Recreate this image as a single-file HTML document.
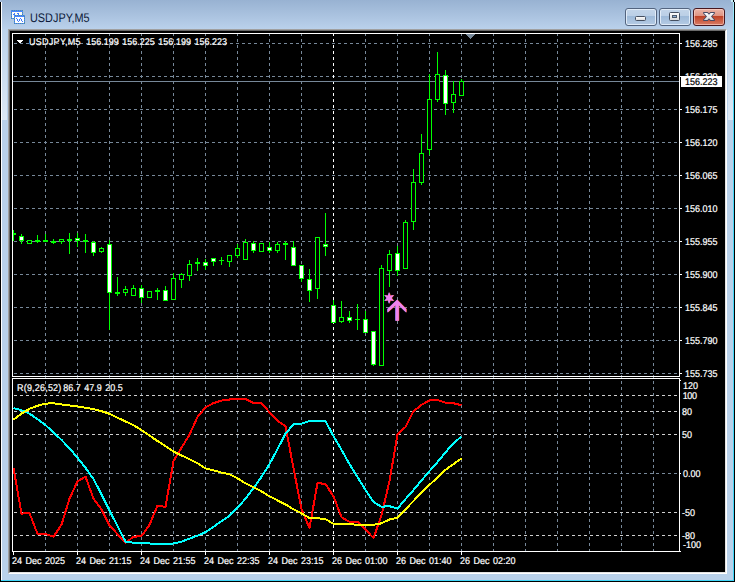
<!DOCTYPE html>
<html><head><meta charset="utf-8"><title>USDJPY,M5</title>
<style>
html,body{margin:0;padding:0;background:#fff;}
body{width:737px;height:582px;position:relative;overflow:hidden;font-family:"Liberation Sans",sans-serif;}
.abs{position:absolute;}
.t{position:absolute;color:#fff;font-size:9px;line-height:11px;white-space:nowrap;word-spacing:1px;font-family:"Liberation Sans",sans-serif;transform:scaleY(1.09);text-rendering:geometricPrecision;transform-origin:0 0;-webkit-text-stroke:.2px #fff;}
#win{left:0;top:0;width:735px;height:582px;background:#000;}
#frame{left:1px;top:0;width:733px;height:581px;background:#b9d1ea;}
#title{left:1px;top:0;width:733px;height:29px;background:linear-gradient(#98b2d2,#bad1eb);}
#hl-l{left:1px;top:2px;width:1px;height:578px;background:#fff;}
#hl-r{left:733px;top:2px;width:1px;height:579px;background:linear-gradient(#aeeefc 0,#46d8f8 50px,#3fd5f7 100%);}
#hl-b{left:1px;top:580px;width:733px;height:1px;background:#3fd5f7;}
#client{left:8px;top:29px;width:719px;height:545px;background:#000;box-sizing:border-box;border-top:1px solid #a0a0a0;border-left:1px solid #a0a0a0;border-right:1px solid #fff;border-bottom:1px solid #fff;}
#client2{left:9px;top:30px;width:717px;height:543px;background:#000;box-sizing:border-box;border-top:1px solid #696969;border-left:1px solid #696969;border-right:1px solid #e3e3e3;border-bottom:1px solid #e3e3e3;}
#ttl{left:30px;top:11px;text-rendering:geometricPrecision;font-size:12.5px;line-height:15px;color:#0d1a3a;white-space:nowrap;transform:scaleX(.87);transform-origin:0 0;}
.btn{position:absolute;top:8px;width:32px;height:18px;box-sizing:border-box;border:1px solid #53647f;border-radius:3px;background:linear-gradient(#c3d5e9 0,#bbcfe6 42%,#9ebad9 46%,#b5cbe4 100%);box-shadow:inset 0 0 0 1px rgba(228,238,249,.9);}
#bc{border-color:#471820;background:linear-gradient(#ebb5a8 0,#df9483 42%,#bf4226 46%,#d97c66 100%);box-shadow:inset 0 0 0 1px rgba(255,215,205,.6);}
#pricebox{left:681px;top:76px;width:41px;height:11px;background:#fff;}
</style></head><body>
<div id="win" class="abs"></div>
<div id="frame" class="abs"></div>
<div id="title" class="abs"></div>
<div class="abs" style="left:2px;top:29px;width:5px;height:91px;background:linear-gradient(rgba(255,255,255,.05),rgba(255,255,255,.5))"></div>
<div class="abs" style="left:728px;top:29px;width:5px;height:91px;background:linear-gradient(rgba(255,255,255,.05),rgba(255,255,255,.5))"></div>
<div id="hl-l" class="abs"></div>
<div id="hl-r" class="abs"></div>
<div id="hl-b" class="abs"></div>
<div class="abs" style="left:0;top:0;width:1px;height:2px;background:#a9c1df"></div>
<div class="abs" style="left:731px;top:0;width:2px;height:2px;background:#c8f0f8"></div>
<div class="abs" style="left:733px;top:0;width:1px;height:2px;background:#000"></div>
<div class="abs" style="left:734px;top:0;width:1px;height:2px;background:#d4e4f2"></div>
<div id="client" class="abs"></div>
<div id="client2" class="abs"></div>
<svg class="abs" style="left:0;top:0" width="737" height="582" viewBox="0 0 737 582" shape-rendering="crispEdges">
<defs>
<clipPath id="cm"><rect x="13" y="34" width="666" height="342"/></clipPath>
<clipPath id="ci"><rect x="13" y="379" width="666" height="172"/></clipPath>
</defs>
<line x1="13" x2="679" y1="43.5" y2="43.5" stroke="#778899" stroke-dasharray="3 3" stroke-dashoffset="5"/>
<line x1="13" x2="679" y1="76.5" y2="76.5" stroke="#778899" stroke-dasharray="3 3" stroke-dashoffset="5"/>
<line x1="13" x2="679" y1="109.5" y2="109.5" stroke="#778899" stroke-dasharray="3 3" stroke-dashoffset="5"/>
<line x1="13" x2="679" y1="142.5" y2="142.5" stroke="#778899" stroke-dasharray="3 3" stroke-dashoffset="5"/>
<line x1="13" x2="679" y1="175.5" y2="175.5" stroke="#778899" stroke-dasharray="3 3" stroke-dashoffset="5"/>
<line x1="13" x2="679" y1="208.5" y2="208.5" stroke="#778899" stroke-dasharray="3 3" stroke-dashoffset="5"/>
<line x1="13" x2="679" y1="241.5" y2="241.5" stroke="#778899" stroke-dasharray="3 3" stroke-dashoffset="5"/>
<line x1="13" x2="679" y1="274.5" y2="274.5" stroke="#778899" stroke-dasharray="3 3" stroke-dashoffset="5"/>
<line x1="13" x2="679" y1="307.5" y2="307.5" stroke="#778899" stroke-dasharray="3 3" stroke-dashoffset="5"/>
<line x1="13" x2="679" y1="340.5" y2="340.5" stroke="#778899" stroke-dasharray="3 3" stroke-dashoffset="5"/>
<line x1="13" x2="679" y1="373.5" y2="373.5" stroke="#778899" stroke-dasharray="3 3" stroke-dashoffset="5"/>
<line x1="45.5" x2="45.5" y1="34" y2="378" stroke="#778899" stroke-dasharray="3 3" stroke-dashoffset="1"/>
<line x1="45.5" x2="45.5" y1="379" y2="551" stroke="#778899" stroke-dasharray="3 3" stroke-dashoffset="4"/>
<line x1="77.5" x2="77.5" y1="34" y2="378" stroke="#778899" stroke-dasharray="3 3" stroke-dashoffset="1"/>
<line x1="77.5" x2="77.5" y1="379" y2="551" stroke="#778899" stroke-dasharray="3 3" stroke-dashoffset="4"/>
<line x1="109.5" x2="109.5" y1="34" y2="378" stroke="#778899" stroke-dasharray="3 3" stroke-dashoffset="1"/>
<line x1="109.5" x2="109.5" y1="379" y2="551" stroke="#778899" stroke-dasharray="3 3" stroke-dashoffset="4"/>
<line x1="141.5" x2="141.5" y1="34" y2="378" stroke="#778899" stroke-dasharray="3 3" stroke-dashoffset="1"/>
<line x1="141.5" x2="141.5" y1="379" y2="551" stroke="#778899" stroke-dasharray="3 3" stroke-dashoffset="4"/>
<line x1="173.5" x2="173.5" y1="34" y2="378" stroke="#778899" stroke-dasharray="3 3" stroke-dashoffset="1"/>
<line x1="173.5" x2="173.5" y1="379" y2="551" stroke="#778899" stroke-dasharray="3 3" stroke-dashoffset="4"/>
<line x1="205.5" x2="205.5" y1="34" y2="378" stroke="#778899" stroke-dasharray="3 3" stroke-dashoffset="1"/>
<line x1="205.5" x2="205.5" y1="379" y2="551" stroke="#778899" stroke-dasharray="3 3" stroke-dashoffset="4"/>
<line x1="237.5" x2="237.5" y1="34" y2="378" stroke="#778899" stroke-dasharray="3 3" stroke-dashoffset="1"/>
<line x1="237.5" x2="237.5" y1="379" y2="551" stroke="#778899" stroke-dasharray="3 3" stroke-dashoffset="4"/>
<line x1="269.5" x2="269.5" y1="34" y2="378" stroke="#778899" stroke-dasharray="3 3" stroke-dashoffset="1"/>
<line x1="269.5" x2="269.5" y1="379" y2="551" stroke="#778899" stroke-dasharray="3 3" stroke-dashoffset="4"/>
<line x1="301.5" x2="301.5" y1="34" y2="378" stroke="#778899" stroke-dasharray="3 3" stroke-dashoffset="1"/>
<line x1="301.5" x2="301.5" y1="379" y2="551" stroke="#778899" stroke-dasharray="3 3" stroke-dashoffset="4"/>
<line x1="333.5" x2="333.5" y1="34" y2="378" stroke="#ffffff" stroke-dasharray="3 3" stroke-dashoffset="1"/>
<line x1="333.5" x2="333.5" y1="379" y2="551" stroke="#ffffff" stroke-dasharray="3 3" stroke-dashoffset="4"/>
<line x1="365.5" x2="365.5" y1="34" y2="378" stroke="#778899" stroke-dasharray="3 3" stroke-dashoffset="1"/>
<line x1="365.5" x2="365.5" y1="379" y2="551" stroke="#778899" stroke-dasharray="3 3" stroke-dashoffset="4"/>
<line x1="397.5" x2="397.5" y1="34" y2="378" stroke="#778899" stroke-dasharray="3 3" stroke-dashoffset="1"/>
<line x1="397.5" x2="397.5" y1="379" y2="551" stroke="#778899" stroke-dasharray="3 3" stroke-dashoffset="4"/>
<line x1="429.5" x2="429.5" y1="34" y2="378" stroke="#778899" stroke-dasharray="3 3" stroke-dashoffset="1"/>
<line x1="429.5" x2="429.5" y1="379" y2="551" stroke="#778899" stroke-dasharray="3 3" stroke-dashoffset="4"/>
<line x1="461.5" x2="461.5" y1="34" y2="378" stroke="#778899" stroke-dasharray="3 3" stroke-dashoffset="1"/>
<line x1="461.5" x2="461.5" y1="379" y2="551" stroke="#778899" stroke-dasharray="3 3" stroke-dashoffset="4"/>
<line x1="493.5" x2="493.5" y1="34" y2="378" stroke="#778899" stroke-dasharray="3 3" stroke-dashoffset="1"/>
<line x1="493.5" x2="493.5" y1="379" y2="551" stroke="#778899" stroke-dasharray="3 3" stroke-dashoffset="4"/>
<line x1="525.5" x2="525.5" y1="34" y2="378" stroke="#778899" stroke-dasharray="3 3" stroke-dashoffset="1"/>
<line x1="525.5" x2="525.5" y1="379" y2="551" stroke="#778899" stroke-dasharray="3 3" stroke-dashoffset="4"/>
<line x1="557.5" x2="557.5" y1="34" y2="378" stroke="#778899" stroke-dasharray="3 3" stroke-dashoffset="1"/>
<line x1="557.5" x2="557.5" y1="379" y2="551" stroke="#778899" stroke-dasharray="3 3" stroke-dashoffset="4"/>
<line x1="589.5" x2="589.5" y1="34" y2="378" stroke="#778899" stroke-dasharray="3 3" stroke-dashoffset="1"/>
<line x1="589.5" x2="589.5" y1="379" y2="551" stroke="#778899" stroke-dasharray="3 3" stroke-dashoffset="4"/>
<line x1="621.5" x2="621.5" y1="34" y2="378" stroke="#778899" stroke-dasharray="3 3" stroke-dashoffset="1"/>
<line x1="621.5" x2="621.5" y1="379" y2="551" stroke="#778899" stroke-dasharray="3 3" stroke-dashoffset="4"/>
<line x1="653.5" x2="653.5" y1="34" y2="378" stroke="#778899" stroke-dasharray="3 3" stroke-dashoffset="1"/>
<line x1="653.5" x2="653.5" y1="379" y2="551" stroke="#778899" stroke-dasharray="3 3" stroke-dashoffset="4"/>
<line x1="13" x2="679" y1="395.5" y2="395.5" stroke="#cfcfcf" stroke-dasharray="3 3" stroke-dashoffset="5"/>
<line x1="13" x2="679" y1="411.5" y2="411.5" stroke="#cfcfcf" stroke-dasharray="3 3" stroke-dashoffset="5"/>
<line x1="13" x2="679" y1="434.5" y2="434.5" stroke="#cfcfcf" stroke-dasharray="3 3" stroke-dashoffset="5"/>
<line x1="13" x2="679" y1="473.5" y2="473.5" stroke="#778899" stroke-dasharray="3 3" stroke-dashoffset="5"/>
<line x1="13" x2="679" y1="512.5" y2="512.5" stroke="#cfcfcf" stroke-dasharray="3 3" stroke-dashoffset="5"/>
<line x1="13" x2="679" y1="535.5" y2="535.5" stroke="#cfcfcf" stroke-dasharray="3 3" stroke-dashoffset="5"/>
<line x1="13" x2="679" y1="81.5" y2="81.5" stroke="#778899"/>
<g clip-path="url(#cm)">
<rect x="13" y="230" width="1" height="11" fill="#00ff00"/>
<rect x="11" y="233" width="5" height="2" fill="#00ff00"/>
<rect x="21" y="234" width="1" height="10" fill="#00ff00"/>
<rect x="19" y="236" width="5" height="5" fill="#00ff00"/>
<rect x="20" y="237" width="3" height="3" fill="#ffffff"/>
<rect x="29" y="240" width="1" height="4" fill="#00ff00"/>
<rect x="27" y="240" width="5" height="4" fill="#00ff00"/>
<rect x="28" y="241" width="3" height="2" fill="#000000"/>
<rect x="37" y="235" width="1" height="8" fill="#00ff00"/>
<rect x="35" y="240" width="5" height="2" fill="#00ff00"/>
<rect x="45" y="234" width="1" height="8" fill="#00ff00"/>
<rect x="43" y="240" width="5" height="2" fill="#00ff00"/>
<rect x="53" y="239" width="1" height="5" fill="#00ff00"/>
<rect x="51" y="241" width="5" height="2" fill="#00ff00"/>
<rect x="61" y="239" width="1" height="5" fill="#00ff00"/>
<rect x="59" y="239" width="5" height="3" fill="#00ff00"/>
<rect x="60" y="240" width="3" height="1" fill="#000000"/>
<rect x="69" y="233" width="1" height="21" fill="#00ff00"/>
<rect x="67" y="239" width="5" height="2" fill="#00ff00"/>
<rect x="77" y="233" width="1" height="14" fill="#00ff00"/>
<rect x="75" y="238" width="5" height="3" fill="#00ff00"/>
<rect x="76" y="239" width="3" height="1" fill="#ffffff"/>
<rect x="85" y="234" width="1" height="19" fill="#00ff00"/>
<rect x="83" y="240" width="5" height="2" fill="#00ff00"/>
<rect x="93" y="241" width="1" height="15" fill="#00ff00"/>
<rect x="91" y="242" width="5" height="11" fill="#00ff00"/>
<rect x="92" y="243" width="3" height="9" fill="#ffffff"/>
<rect x="101" y="247" width="1" height="6" fill="#00ff00"/>
<rect x="99" y="248" width="5" height="4" fill="#00ff00"/>
<rect x="100" y="249" width="3" height="2" fill="#000000"/>
<rect x="109" y="240" width="1" height="90" fill="#00ff00"/>
<rect x="107" y="244" width="5" height="49" fill="#00ff00"/>
<rect x="108" y="245" width="3" height="47" fill="#ffffff"/>
<rect x="117" y="277" width="1" height="19" fill="#00ff00"/>
<rect x="115" y="292" width="5" height="2" fill="#00ff00"/>
<rect x="125" y="286" width="1" height="10" fill="#00ff00"/>
<rect x="123" y="289" width="5" height="4" fill="#00ff00"/>
<rect x="124" y="290" width="3" height="2" fill="#000000"/>
<rect x="133" y="285" width="1" height="11" fill="#00ff00"/>
<rect x="131" y="288" width="5" height="8" fill="#00ff00"/>
<rect x="132" y="289" width="3" height="6" fill="#000000"/>
<rect x="141" y="285" width="1" height="18" fill="#00ff00"/>
<rect x="139" y="288" width="5" height="10" fill="#00ff00"/>
<rect x="140" y="289" width="3" height="8" fill="#ffffff"/>
<rect x="149" y="291" width="1" height="7" fill="#00ff00"/>
<rect x="147" y="291" width="5" height="7" fill="#00ff00"/>
<rect x="148" y="292" width="3" height="5" fill="#000000"/>
<rect x="157" y="288" width="1" height="12" fill="#00ff00"/>
<rect x="155" y="290" width="5" height="2" fill="#00ff00"/>
<rect x="165" y="286" width="1" height="15" fill="#00ff00"/>
<rect x="163" y="290" width="5" height="11" fill="#00ff00"/>
<rect x="164" y="291" width="3" height="9" fill="#ffffff"/>
<rect x="173" y="273" width="1" height="27" fill="#00ff00"/>
<rect x="171" y="278" width="5" height="22" fill="#00ff00"/>
<rect x="172" y="279" width="3" height="20" fill="#000000"/>
<rect x="181" y="273" width="1" height="15" fill="#00ff00"/>
<rect x="179" y="274" width="5" height="6" fill="#00ff00"/>
<rect x="180" y="275" width="3" height="4" fill="#000000"/>
<rect x="189" y="260" width="1" height="21" fill="#00ff00"/>
<rect x="187" y="264" width="5" height="12" fill="#00ff00"/>
<rect x="188" y="265" width="3" height="10" fill="#000000"/>
<rect x="197" y="258" width="1" height="13" fill="#00ff00"/>
<rect x="195" y="262" width="5" height="2" fill="#00ff00"/>
<rect x="205" y="259" width="1" height="11" fill="#00ff00"/>
<rect x="203" y="262" width="5" height="4" fill="#00ff00"/>
<rect x="204" y="263" width="3" height="2" fill="#ffffff"/>
<rect x="213" y="258" width="1" height="8" fill="#00ff00"/>
<rect x="211" y="258" width="5" height="4" fill="#00ff00"/>
<rect x="212" y="259" width="3" height="2" fill="#ffffff"/>
<rect x="221" y="257" width="1" height="8" fill="#00ff00"/>
<rect x="219" y="260" width="5" height="1" fill="#00ff00"/>
<rect x="229" y="255" width="1" height="12" fill="#00ff00"/>
<rect x="227" y="255" width="5" height="7" fill="#00ff00"/>
<rect x="228" y="256" width="3" height="5" fill="#000000"/>
<rect x="237" y="244" width="1" height="14" fill="#00ff00"/>
<rect x="235" y="248" width="5" height="8" fill="#00ff00"/>
<rect x="236" y="249" width="3" height="6" fill="#000000"/>
<rect x="245" y="239" width="1" height="21" fill="#00ff00"/>
<rect x="243" y="242" width="5" height="18" fill="#00ff00"/>
<rect x="244" y="243" width="3" height="16" fill="#000000"/>
<rect x="253" y="241" width="1" height="12" fill="#00ff00"/>
<rect x="251" y="243" width="5" height="8" fill="#00ff00"/>
<rect x="252" y="244" width="3" height="6" fill="#ffffff"/>
<rect x="261" y="243" width="1" height="9" fill="#00ff00"/>
<rect x="259" y="243" width="5" height="9" fill="#00ff00"/>
<rect x="260" y="244" width="3" height="7" fill="#000000"/>
<rect x="269" y="242" width="1" height="11" fill="#00ff00"/>
<rect x="267" y="247" width="5" height="4" fill="#00ff00"/>
<rect x="268" y="248" width="3" height="2" fill="#ffffff"/>
<rect x="277" y="242" width="1" height="11" fill="#00ff00"/>
<rect x="275" y="244" width="5" height="7" fill="#00ff00"/>
<rect x="276" y="245" width="3" height="5" fill="#000000"/>
<rect x="285" y="241" width="1" height="19" fill="#00ff00"/>
<rect x="283" y="243" width="5" height="2" fill="#00ff00"/>
<rect x="293" y="241" width="1" height="25" fill="#00ff00"/>
<rect x="291" y="247" width="5" height="19" fill="#00ff00"/>
<rect x="292" y="248" width="3" height="17" fill="#ffffff"/>
<rect x="301" y="265" width="1" height="17" fill="#00ff00"/>
<rect x="299" y="265" width="5" height="14" fill="#00ff00"/>
<rect x="300" y="266" width="3" height="12" fill="#ffffff"/>
<rect x="309" y="269" width="1" height="33" fill="#00ff00"/>
<rect x="307" y="279" width="5" height="12" fill="#00ff00"/>
<rect x="308" y="280" width="3" height="10" fill="#ffffff"/>
<rect x="317" y="237" width="1" height="62" fill="#00ff00"/>
<rect x="315" y="237" width="5" height="52" fill="#00ff00"/>
<rect x="316" y="238" width="3" height="50" fill="#000000"/>
<rect x="325" y="213" width="1" height="43" fill="#00ff00"/>
<rect x="323" y="244" width="5" height="3" fill="#00ff00"/>
<rect x="324" y="245" width="3" height="1" fill="#ffffff"/>
<rect x="333" y="300" width="1" height="23" fill="#00ff00"/>
<rect x="331" y="305" width="5" height="18" fill="#00ff00"/>
<rect x="332" y="306" width="3" height="16" fill="#ffffff"/>
<rect x="341" y="301" width="1" height="22" fill="#00ff00"/>
<rect x="339" y="317" width="5" height="5" fill="#00ff00"/>
<rect x="340" y="318" width="3" height="3" fill="#000000"/>
<rect x="349" y="311" width="1" height="12" fill="#00ff00"/>
<rect x="347" y="317" width="5" height="4" fill="#00ff00"/>
<rect x="348" y="318" width="3" height="2" fill="#ffffff"/>
<rect x="357" y="304" width="1" height="26" fill="#00ff00"/>
<rect x="355" y="319" width="5" height="1" fill="#00ff00"/>
<rect x="365" y="311" width="1" height="22" fill="#00ff00"/>
<rect x="363" y="319" width="5" height="14" fill="#00ff00"/>
<rect x="364" y="320" width="3" height="12" fill="#ffffff"/>
<rect x="373" y="331" width="1" height="35" fill="#00ff00"/>
<rect x="371" y="331" width="5" height="34" fill="#00ff00"/>
<rect x="372" y="332" width="3" height="32" fill="#ffffff"/>
<rect x="381" y="265" width="1" height="101" fill="#00ff00"/>
<rect x="379" y="268" width="5" height="98" fill="#00ff00"/>
<rect x="380" y="269" width="3" height="96" fill="#000000"/>
<rect x="389" y="250" width="1" height="37" fill="#00ff00"/>
<rect x="387" y="254" width="5" height="17" fill="#00ff00"/>
<rect x="388" y="255" width="3" height="15" fill="#000000"/>
<rect x="397" y="246" width="1" height="30" fill="#00ff00"/>
<rect x="395" y="253" width="5" height="18" fill="#00ff00"/>
<rect x="396" y="254" width="3" height="16" fill="#ffffff"/>
<rect x="405" y="220" width="1" height="49" fill="#00ff00"/>
<rect x="403" y="222" width="5" height="47" fill="#00ff00"/>
<rect x="404" y="223" width="3" height="45" fill="#000000"/>
<rect x="413" y="169" width="1" height="61" fill="#00ff00"/>
<rect x="411" y="182" width="5" height="40" fill="#00ff00"/>
<rect x="412" y="183" width="3" height="38" fill="#000000"/>
<rect x="421" y="134" width="1" height="51" fill="#00ff00"/>
<rect x="419" y="153" width="5" height="30" fill="#00ff00"/>
<rect x="420" y="154" width="3" height="28" fill="#000000"/>
<rect x="429" y="74" width="1" height="81" fill="#00ff00"/>
<rect x="427" y="99" width="5" height="51" fill="#00ff00"/>
<rect x="428" y="100" width="3" height="49" fill="#000000"/>
<rect x="437" y="52" width="1" height="50" fill="#00ff00"/>
<rect x="435" y="74" width="5" height="26" fill="#00ff00"/>
<rect x="436" y="75" width="3" height="24" fill="#000000"/>
<rect x="445" y="70" width="1" height="45" fill="#00ff00"/>
<rect x="443" y="75" width="5" height="29" fill="#00ff00"/>
<rect x="444" y="76" width="3" height="27" fill="#ffffff"/>
<rect x="453" y="81" width="1" height="32" fill="#00ff00"/>
<rect x="451" y="94" width="5" height="9" fill="#00ff00"/>
<rect x="452" y="95" width="3" height="7" fill="#000000"/>
<rect x="461" y="79" width="1" height="17" fill="#00ff00"/>
<rect x="459" y="81" width="5" height="15" fill="#00ff00"/>
<rect x="460" y="82" width="3" height="13" fill="#000000"/>
</g>
<g clip-path="url(#ci)">
<polyline points="13.5,468.0 21.5,513.6 29.5,513.1 37.5,533.9 45.5,533.9 53.5,536.8 61.5,524.7 69.5,498.7 77.5,481.4 85.5,476.6 93.5,498.7 101.5,509.3 109.5,525.3 117.5,534.1 125.5,542.9 133.5,536.7 141.5,536.2 149.5,524.8 157.5,505.7 165.5,506.9 173.5,461.1 181.5,447.7 189.5,434.7 197.5,417.1 205.5,407.3 213.5,403.1 221.5,400.6 229.5,399.5 237.5,399.0 245.5,399.0 253.5,403.1 261.5,403.1 269.5,412.2 277.5,420.7 285.5,426.4 293.5,468.1 301.5,509.1 309.5,528.1 317.5,482.9 325.5,484.1 333.5,496.3 341.5,517.2 349.5,521.9 357.5,521.9 365.5,529.5 373.5,538.1 381.5,515.3 389.5,481.1 397.5,434.6 405.5,427.0 413.5,411.3 421.5,404.8 429.5,400.4 437.5,399.9 445.5,402.7 453.5,403.3 461.5,405.2" fill="none" stroke="#ff0000" stroke-width="2" stroke-linejoin="round" stroke-linecap="butt"/>
<polyline points="13.5,408.1 21.5,410.2 29.5,413.6 37.5,419.1 45.5,425.1 53.5,432.5 61.5,439.9 69.5,448.3 77.5,457.6 85.5,467.8 93.5,479.1 101.5,494.3 109.5,510.4 117.5,526.1 125.5,541.6 133.5,542.7 141.5,543.1 149.5,543.5 157.5,543.9 165.5,543.9 173.5,543.5 181.5,541.6 189.5,538.6 197.5,535.7 205.5,532.1 213.5,526.8 221.5,521.1 229.5,515.8 237.5,507.7 245.5,498.7 253.5,488.1 261.5,476.8 269.5,464.1 277.5,449.1 285.5,433.7 293.5,424.3 301.5,423.6 309.5,421.1 317.5,421.1 325.5,421.1 333.5,436.1 341.5,449.8 349.5,464.1 357.5,477.1 365.5,490.0 373.5,502.0 381.5,506.7 389.5,506.2 397.5,508.6 405.5,499.1 413.5,490.0 421.5,480.5 429.5,471.1 437.5,462.1 445.5,452.3 453.5,443.2 461.5,436.5" fill="none" stroke="#00ffff" stroke-width="2" stroke-linejoin="round" stroke-linecap="butt"/>
<polyline points="13.5,419.6 21.5,413.6 29.5,408.8 37.5,405.8 45.5,403.6 53.5,403.3 61.5,404.4 69.5,405.4 77.5,406.4 85.5,407.7 93.5,409.2 101.5,411.2 109.5,413.9 117.5,417.7 125.5,421.5 133.5,425.1 141.5,430.1 149.5,435.6 157.5,441.0 165.5,446.2 173.5,451.6 181.5,455.4 189.5,459.3 197.5,463.3 205.5,468.4 213.5,470.3 221.5,472.6 229.5,474.3 237.5,478.4 245.5,483.3 253.5,487.3 261.5,491.4 269.5,496.3 277.5,500.4 285.5,504.4 293.5,509.3 301.5,513.4 309.5,518.0 317.5,518.3 325.5,519.1 333.5,523.9 341.5,524.2 349.5,524.2 357.5,524.8 365.5,524.8 373.5,524.8 381.5,523.3 389.5,519.5 397.5,517.6 405.5,509.2 413.5,501.0 421.5,492.5 429.5,484.9 437.5,477.3 445.5,469.9 453.5,464.1 461.5,458.4" fill="none" stroke="#ffff00" stroke-width="2" stroke-linejoin="round" stroke-linecap="butt"/>
</g>
<polygon points="465,34 475,34 470,39" fill="#778899"/>
<polygon points="16,40 23,40 19.5,43.5" fill="#ffffff"/>
<rect x="12.5" y="33.5" width="667" height="343" fill="none" stroke="#fff"/>
<rect x="12.5" y="378.5" width="667" height="173" fill="none" stroke="#fff"/>
<rect x="680" y="43" width="2" height="1" fill="#fff"/>
<rect x="680" y="76" width="2" height="1" fill="#fff"/>
<rect x="680" y="109" width="2" height="1" fill="#fff"/>
<rect x="680" y="142" width="2" height="1" fill="#fff"/>
<rect x="680" y="175" width="2" height="1" fill="#fff"/>
<rect x="680" y="208" width="2" height="1" fill="#fff"/>
<rect x="680" y="241" width="2" height="1" fill="#fff"/>
<rect x="680" y="274" width="2" height="1" fill="#fff"/>
<rect x="680" y="307" width="2" height="1" fill="#fff"/>
<rect x="680" y="340" width="2" height="1" fill="#fff"/>
<rect x="680" y="373" width="2" height="1" fill="#fff"/>
<rect x="680" y="473" width="1" height="1" fill="#fff"/>
<rect x="680" y="551" width="1" height="1" fill="#fff"/>
<rect x="680" y="380" width="1" height="1" fill="#fff"/>
<rect x="13" y="552" width="1" height="3" fill="#fff"/>
<rect x="77" y="552" width="1" height="3" fill="#fff"/>
<rect x="141" y="552" width="1" height="3" fill="#fff"/>
<rect x="205" y="552" width="1" height="3" fill="#fff"/>
<rect x="269" y="552" width="1" height="3" fill="#fff"/>
<rect x="333" y="552" width="1" height="3" fill="#fff"/>
<rect x="397" y="552" width="1" height="3" fill="#fff"/>
<rect x="461" y="552" width="1" height="3" fill="#fff"/>
<g shape-rendering="geometricPrecision">
<g transform="translate(-0.45,0)" fill="#7a7aff"><path d="M397.2,299.8 L406.3,309 L406.3,312.5 L398.8,305.2 L398.8,320.8 L395.6,320.8 L395.6,305.2 L387.6,312.5 L387.6,309 Z"/><path d="M389.20,292.20 L390.38,295.83 L393.92,295.10 L391.55,298.00 L393.92,300.90 L390.38,300.17 L389.20,303.80 L388.02,300.17 L384.48,300.90 L386.85,298.00 L384.48,295.10 L388.02,295.83 Z"/></g>
<g transform="translate(0.45,0)" fill="#ff5a20"><path d="M397.2,299.8 L406.3,309 L406.3,312.5 L398.8,305.2 L398.8,320.8 L395.6,320.8 L395.6,305.2 L387.6,312.5 L387.6,309 Z"/><path d="M389.20,292.20 L390.38,295.83 L393.92,295.10 L391.55,298.00 L393.92,300.90 L390.38,300.17 L389.20,303.80 L388.02,300.17 L384.48,300.90 L386.85,298.00 L384.48,295.10 L388.02,295.83 Z"/></g>
<g transform="translate(0,0)" fill="#ee82ee"><path d="M397.2,299.8 L406.3,309 L406.3,312.5 L398.8,305.2 L398.8,320.8 L395.6,320.8 L395.6,305.2 L387.6,312.5 L387.6,309 Z"/><path d="M389.20,292.20 L390.38,295.83 L393.92,295.10 L391.55,298.00 L393.92,300.90 L390.38,300.17 L389.20,303.80 L388.02,300.17 L384.48,300.90 L386.85,298.00 L384.48,295.10 L388.02,295.83 Z"/></g>
</g>
</svg>
<div id="pricebox" class="abs"></div>
<div class="t" style="left:685px;top:37.85px;">156.285</div>
<div class="t" style="left:685px;top:70.85px;">156.230</div>
<div class="t" style="left:685px;top:103.85px;">156.175</div>
<div class="t" style="left:685px;top:136.85px;">156.120</div>
<div class="t" style="left:685px;top:169.85px;">156.065</div>
<div class="t" style="left:685px;top:202.85px;">156.010</div>
<div class="t" style="left:685px;top:235.85px;">155.955</div>
<div class="t" style="left:685px;top:268.85px;">155.900</div>
<div class="t" style="left:685px;top:301.85px;">155.845</div>
<div class="t" style="left:685px;top:334.85px;">155.790</div>
<div class="t" style="left:685px;top:367.85px;">155.735</div>
<div class="t" style="left:683px;top:379.85px;">120</div>
<div class="t" style="left:682.7px;top:389.85px;letter-spacing:-.35px;">100</div>
<div class="t" style="left:682px;top:405.85px;">80</div>
<div class="t" style="left:682px;top:428.85px;">50</div>
<div class="t" style="left:683px;top:467.85px;">0.00</div>
<div class="t" style="left:682px;top:506.85px;">-50</div>
<div class="t" style="left:682px;top:529.85px;">-80</div>
<div class="t" style="left:683px;top:538.85px;">-100</div>
<div class="t" style="left:12px;top:554.85px;">24 Dec 2025</div>
<div class="t" style="left:76px;top:554.85px;">24 Dec 21:15</div>
<div class="t" style="left:140px;top:554.85px;">24 Dec 21:55</div>
<div class="t" style="left:204px;top:554.85px;">24 Dec 22:35</div>
<div class="t" style="left:268px;top:554.85px;">24 Dec 23:15</div>
<div class="t" style="left:332px;top:554.85px;">26 Dec 01:00</div>
<div class="t" style="left:396px;top:554.85px;">26 Dec 01:40</div>
<div class="t" style="left:460px;top:554.85px;">26 Dec 02:20</div>
<div class="t" style="left:29px;top:35.85px;letter-spacing:.28px;">USDJPY,M5</div>
<div class="t" style="left:86.3px;top:35.85px;">156.199 156.225 156.199 156.223</div>
<div class="t" style="left:17px;top:381.85px;letter-spacing:.2px;">R(9,26,52)</div>
<div class="t" style="left:63.2px;top:381.85px;">86.7 47.9 20.5</div>
<div class="t" style="left:685px;top:75.85px;color:#000;-webkit-text-stroke-color:#000">156.223</div>
<!-- title icon -->
<svg class="abs" style="left:10px;top:9px" width="16" height="16" viewBox="0 0 16 16" shape-rendering="crispEdges">
<rect x="1" y="1" width="12" height="9" fill="#4a86ff"/>
<rect x="1.500" y="1.500" width="11" height="8" fill="none" stroke="#4f8f9f" stroke-dasharray="1 1"/>
<rect x="2" y="3" width="10" height="6" fill="#fffef4"/>
<rect x="4" y="6" width="11" height="9" fill="#4a86ff"/>
<rect x="4.500" y="6.500" width="10" height="8" fill="none" stroke="#4f8f9f" stroke-dasharray="1 1"/>
<rect x="5" y="8" width="9" height="6" fill="#ffffff"/>
<g fill="#3f7cff"><rect x="6" y="9" width="1" height="1"/><rect x="7" y="10" width="1" height="1"/><rect x="7" y="11" width="1" height="1"/><rect x="8" y="12" width="1" height="1"/><rect x="9" y="11" width="1" height="1"/><rect x="9" y="10" width="1" height="1"/><rect x="10" y="9" width="1" height="1"/><rect x="11" y="10" width="1" height="1"/><rect x="11" y="11" width="1" height="1"/><rect x="12" y="12" width="1" height="1"/><rect x="3" y="5" width="1" height="1"/><rect x="4" y="4" width="1" height="1"/><rect x="4" y="5" width="1" height="1"/><rect x="7" y="4" width="1" height="1"/><rect x="8" y="5" width="1" height="1"/><rect x="8" y="4" width="1" height="1"/></g>
</svg>
<div id="ttl" class="abs">USDJPY,M5</div>
<div class="btn" style="left:625px"></div>
<div class="btn" style="left:659px"></div>
<div class="btn" id="bc" style="left:693px"></div>
<svg class="abs" style="left:625px;top:8px" width="100" height="18" viewBox="0 0 100 18"><defs><linearGradient id="gg" x1="0" y1="0" x2="0" y2="1"><stop offset="0" stop-color="#ffffff"/><stop offset="1" stop-color="#d9dadc"/></linearGradient></defs>
<rect x="10.5" y="8.5" width="10" height="4" rx="1" fill="url(#gg)" stroke="#454f60"/>
<rect x="44.500" y="4.5" width="10" height="8" rx="1" fill="url(#gg)" stroke="#454f60"/>
<rect x="47.5" y="7.5" width="4" height="2" fill="#8fb0d8" stroke="#4d5867"/>
<path d="M78.900,4.900 L82.300,4.900 L84,6.800 L85.700,4.900 L89.100,4.900 L86,8.500 L89.100,12.100 L85.700,12.100 L84,10.200 L82.300,12.100 L78.900,12.100 L82,8.500 Z" fill="url(#gg)" stroke="#474c66" stroke-width="1.800" stroke-linejoin="round" paint-order="stroke"/>
</svg>
</body></html>
